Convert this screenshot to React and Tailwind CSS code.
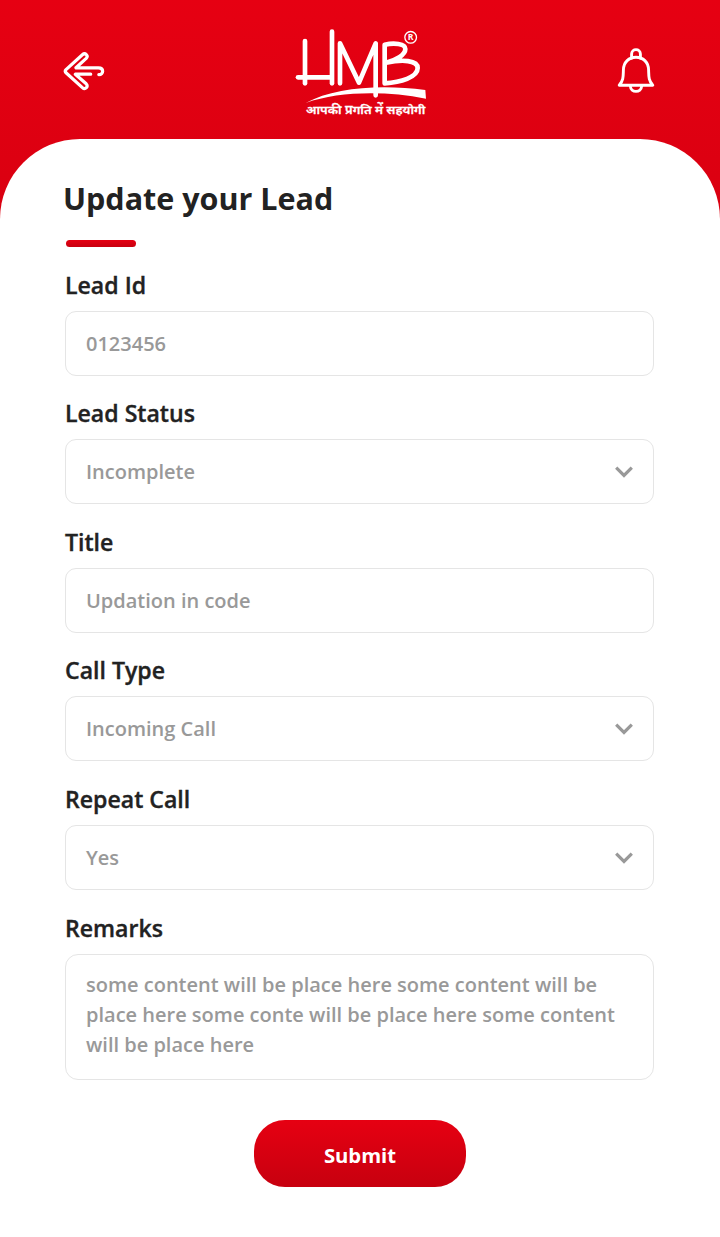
import React from "react";

function BackIcon() {
  return (
    <svg className="size-full" viewBox="0 0 42 42" fill="none" stroke="white" strokeWidth="3.2" strokeLinecap="round" strokeLinejoin="round">
      <path d="M13 17.8 L23.2 8.4 C25.8 5.6 22.2 2.2 19.4 4.7 L3 19.6 Q1.5 21.2 3 22.8 L19.4 37.6 C22.2 40.2 26 36.6 23.2 33.8 L12.3 24.2 H27.7 M13 17.8 H35.5 C41 17.8 41 24.6 35.8 24.6" />
    </svg>
  );
}

function BellIcon() {
  return (
    <svg className="size-full" viewBox="0 0 38 46" fill="none" stroke="white" strokeWidth="2.9" strokeLinecap="round" strokeLinejoin="round">
      <path d="M14.6 10.2 V6 C14.6 0.2 23.4 0.2 23.4 6 V10.2" />
      <path d="M2.2 37.2 C6.6 32.5 6.2 28 6.4 22 C6.6 14 12 9.3 19 9.3 C26 9.3 31.4 14 31.6 22 C31.8 28 31.4 32.5 35.8 37.2 Z" />
      <path d="M13.3 38 C13.8 45.2 24.2 45.2 24.7 38" />
    </svg>
  );
}

function Logo() {
  return (
    <svg className="h-[105px] w-[150px]" viewBox="0 0 450 315" fill="none" stroke="white" strokeWidth="14" strokeLinecap="round" strokeLinejoin="round">
      <path d="M60 63 V190" />
      <path d="M141 35 V190" />
      <path d="M39 172 H139" />
      <path d="M165 190 V70 L222 188 L272 70 V226" />
      <path d="M299 190 V74 C326 68 361 70 361 87 C361 105 332 121 303 128 C352 118 398 120 398 144 C398 172 346 187 299 190" />
      <path d="M62 249 C150 201 290 193 421 210 L423 236 C300 212 160 214 62 249 Z" fill="white" stroke="none" />
      <circle cx="377" cy="52" r="17.5" strokeWidth="4" />
      <text x="377" y="61" textAnchor="middle" fontSize="26" className="fill-white stroke-none font-['Open_Sans',sans-serif] font-bold">R</text>
      <text x="63" y="281" textLength="358" lengthAdjust="spacingAndGlyphs" fontSize="35" strokeWidth="0.8" className="fill-white font-['Noto_Sans','Noto_Sans_Devanagari',sans-serif] font-semibold">आपकी प्रगति में सहयोगी</text>
    </svg>
  );
}

function Label({ children }) {
  return (
    <div className="h-[51px] text-[23.1px] font-semibold leading-[50px] text-[#222] [-webkit-text-stroke:0.35px_#222]">{children}</div>
  );
}

function Field({ label, value, select }) {
  return (
    <div>
      <Label>{label}</Label>
      <div className="flex h-[65px] items-center justify-between rounded-[11px] border border-[#e5e5e5] pl-5 pr-5 text-[20px] font-semibold text-[#999]">
        <span className="pt-px">{value}</span>
        {select && (
          <svg className="h-3 w-[18px]" viewBox="0 0 18 12" fill="none" stroke="#999" strokeWidth="3.2">
            <path d="M1.2 1.7 L9 9.5 L16.8 1.7" />
          </svg>
        )}
      </div>
    </div>
  );
}

const fields = [
  { label: "Lead Id", value: "0123456" },
  { label: "Lead Status", value: "Incomplete", select: true },
  { label: "Title", value: "Updation in code" },
  { label: "Call Type", value: "Incoming Call", select: true },
  { label: "Repeat Call", value: "Yes", select: true },
];

export default function App() {
  return (
    <div className="h-[1237px] w-[720px] overflow-hidden bg-linear-to-b from-[#e60012] from-0% to-[#c7000f] to-[550px] font-['Open_Sans',sans-serif]">
      <header className="flex h-[138.5px] items-start justify-between pl-[63px] pr-[65px] pt-5">
        <button className="mt-[30px] size-[42px]" aria-label="Back"><BackIcon /></button>
        <div className="-ml-[3px]"><Logo /></div>
        <button className="mt-7 h-[46px] w-[38px]" aria-label="Notifications"><BellIcon /></button>
      </header>
      <main className="h-[1099px] rounded-t-[80px] bg-white pl-[65px] pr-[66px] pt-[39px]">
        <h1 className="-ml-0.5 h-[41px] text-[30.5px] font-bold leading-[41px] text-[#222]">Update your Lead</h1>
        <div className="ml-px mt-[21.5px] h-[7px] w-[70px] rounded-full bg-linear-to-b from-[#e60012] to-[#c7000f]" />
        <div className="mt-[12.7px] flex flex-col gap-[12.6px]">
          {fields.map((f) => <Field key={f.label} {...f} />)}
          <div>
            <Label>Remarks</Label>
            <div className="h-[126px] whitespace-nowrap rounded-[13px] border border-[#e5e5e5] px-5 pt-[15px] text-[20px] font-semibold leading-[30px] text-[#999]">
              some content will be place here some content will be<br />
              place here some conte will be place here some content<br />
              will be place here
            </div>
          </div>
        </div>
        <button className="mx-auto mt-10 block h-[67.5px] w-[212px] rounded-[31px] bg-linear-to-b from-[#e60012] to-[#c7000f] pl-px pt-[3px] text-[20.3px] font-bold text-white">Submit</button>
      </main>
    </div>
  );
}
